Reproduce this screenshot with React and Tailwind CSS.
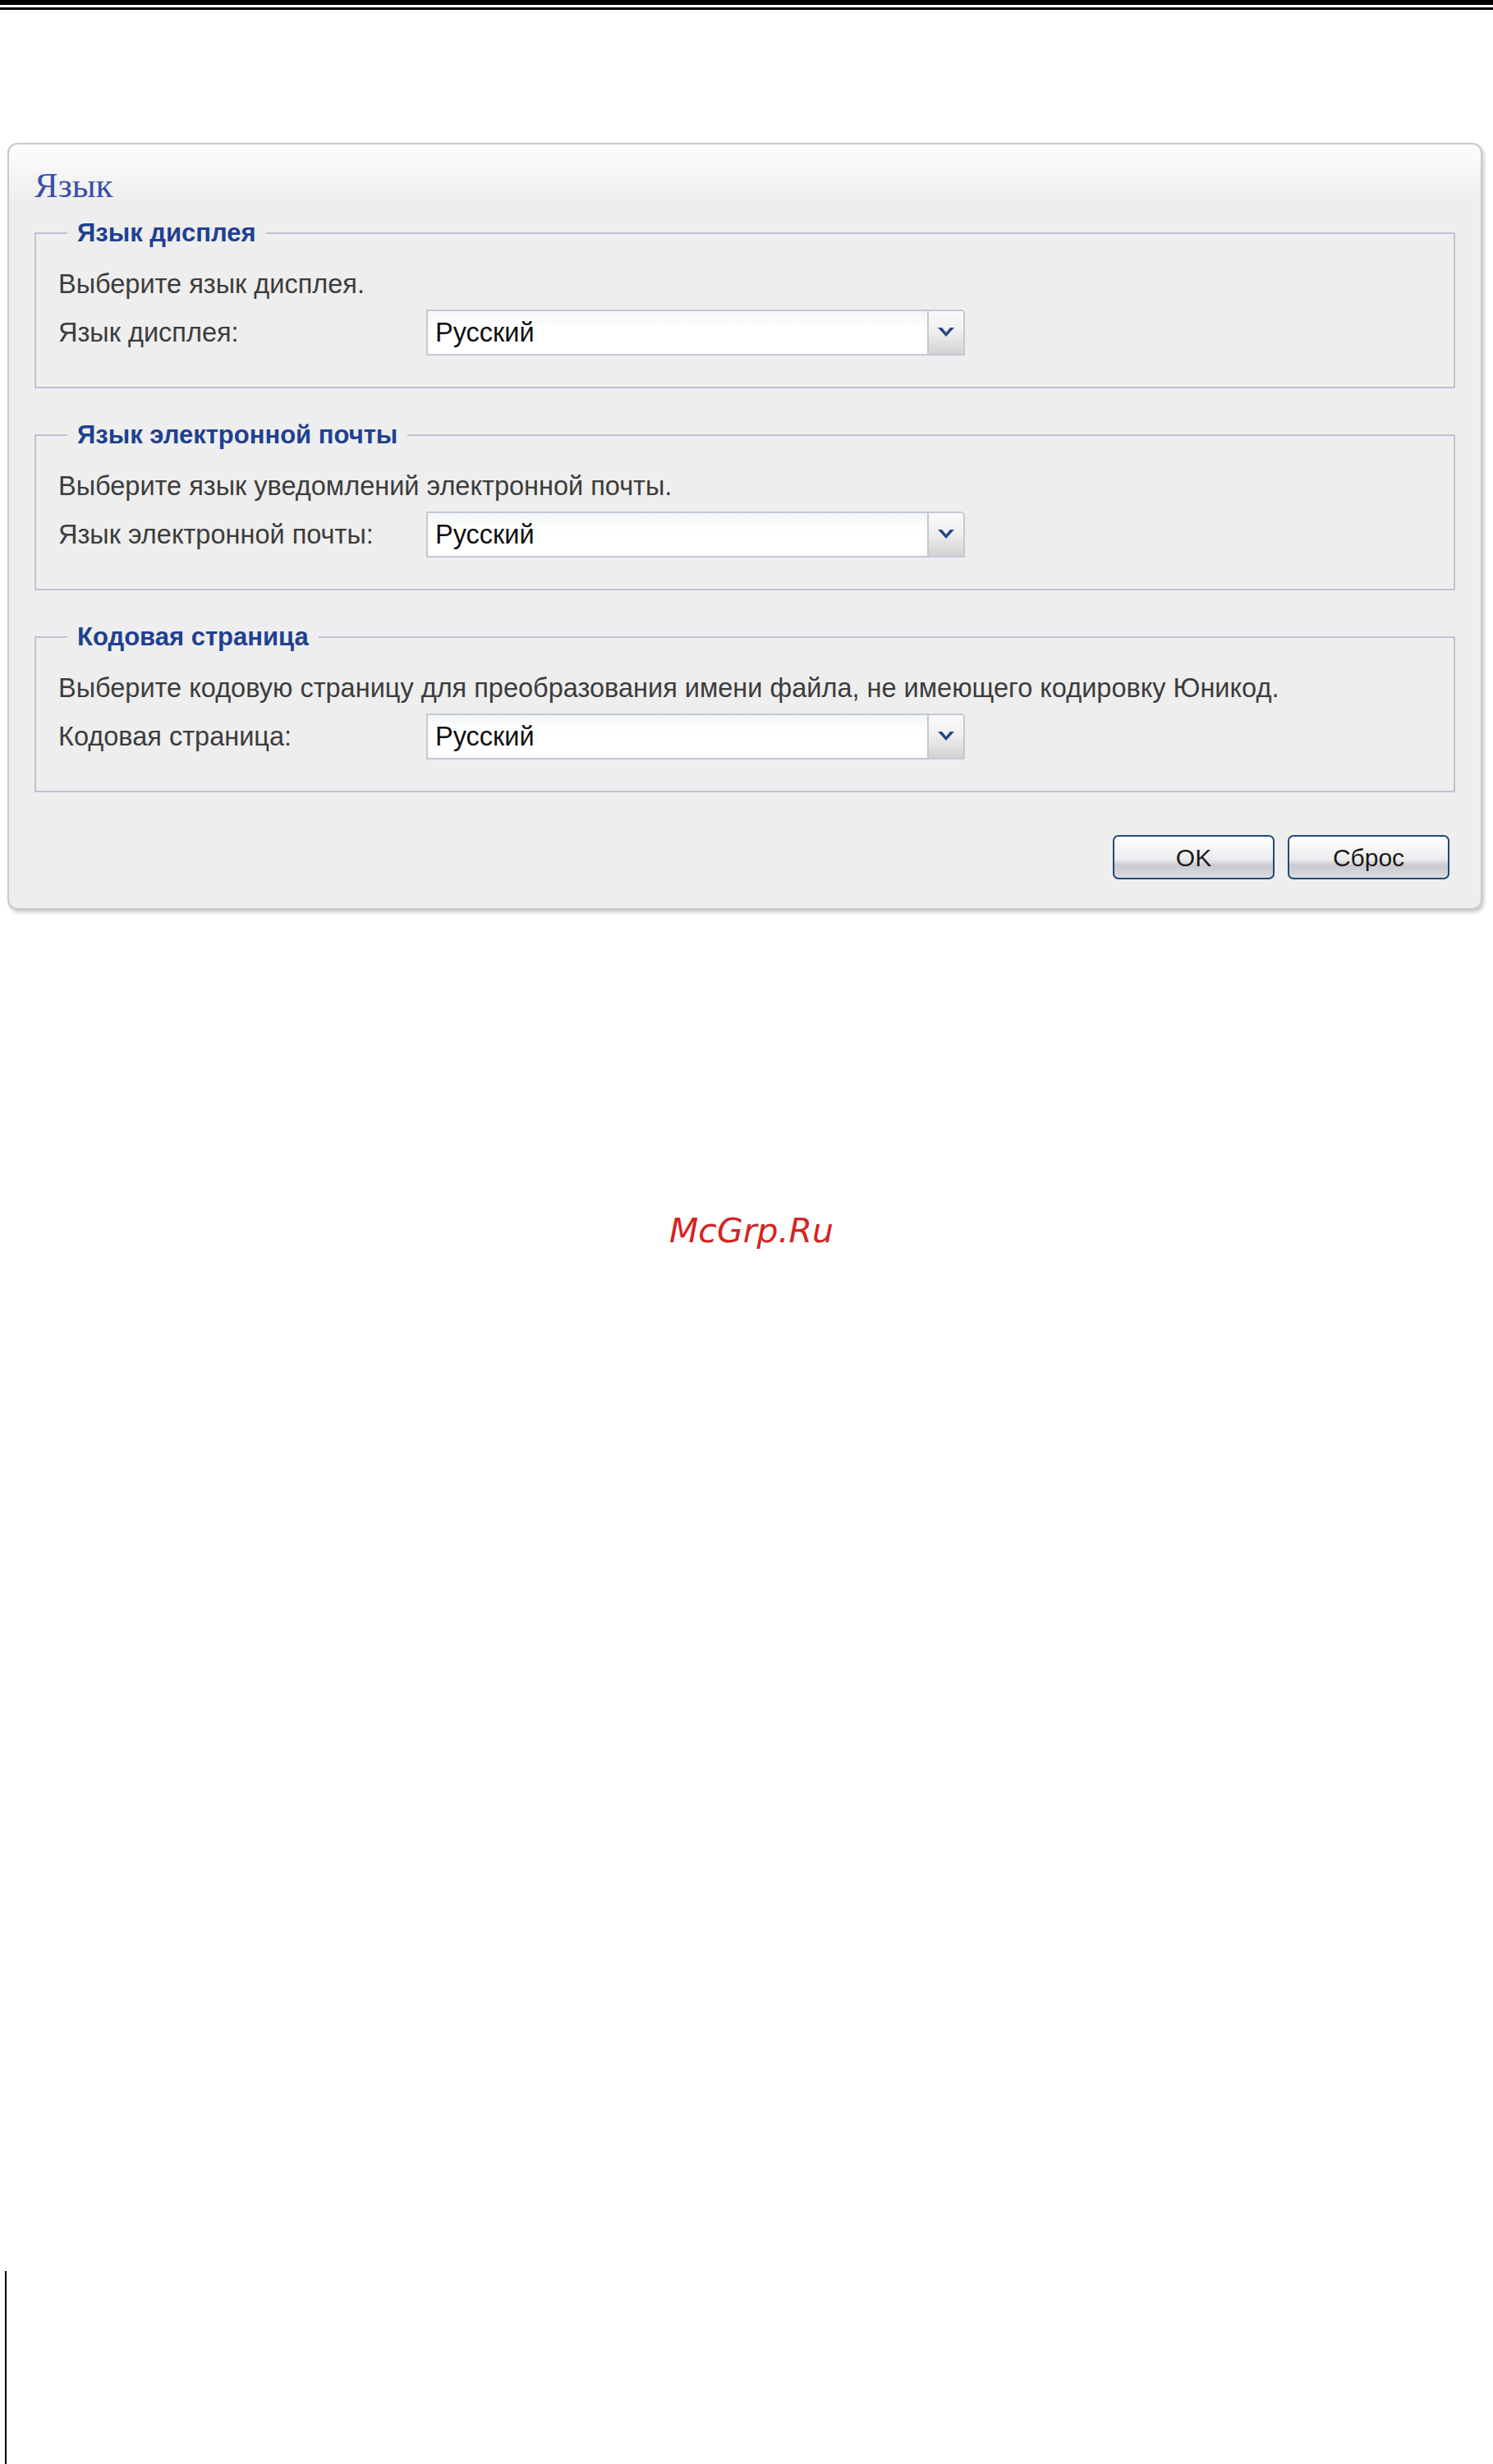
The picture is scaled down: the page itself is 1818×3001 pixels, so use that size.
import { Fragment } from "react";

const body = { fontFamily: '"Liberation Sans", Arial, sans-serif' };

function Chevron() {
  return (
    <svg width="20" height="12" viewBox="0 0 20 12">
      <polygon points="0,0 5,0 10,6 15,0 20,0 10,11" fill="#27478a" />
    </svg>
  );
}

function Select({ value }) {
  return (
    <div className="flex h-[56px] w-[656px] rounded-tr-[5px] border-2 border-[#c4c8d6] bg-white">
      <div className="flex flex-1 items-center bg-[linear-gradient(to_bottom,#f4f6f6_0px,#ffffff_22px)] pl-[9px] text-[32.5px] text-[#111]">
        {value}
      </div>
      <div className="flex w-[44px] items-center justify-center rounded-tr-[4px] border-l-2 border-[#c4c8d6] bg-[linear-gradient(to_bottom,#fafafa,#f0f0f0_45%,#d2d2d2)]">
        <Chevron />
      </div>
    </div>
  );
}

function Group({ title, hint, label }) {
  return (
    <fieldset className="border-2 border-[#bec2d2] pt-[23px] pb-[38px] pl-[27px]">
      <legend className="ml-[11px] px-[12px] text-[31px] font-bold leading-[38px] text-[#1f4190]">
        {title}
      </legend>
      <div className="text-[32.5px] leading-[40px] text-[#3c3c3c]">{hint}</div>
      <div className="mt-[11px] flex items-center">
        <div className="w-[448px] text-[32.5px] text-[#3c3c3c]">{label}</div>
        <Select value="Русский" />
      </div>
    </fieldset>
  );
}

function Btn({ children }) {
  return (
    <button className="h-[54px] w-[197px] rounded-[7px] border-2 border-[#1f4a78] bg-[linear-gradient(to_bottom,#ffffff_0%,#ececee_55%,#c9cad0_70%,#dcdde0_100%)] text-[30px] text-[#1a1a1a]">
      {children}
    </button>
  );
}

const groups = [
  { title: "Язык дисплея", hint: "Выберите язык дисплея.", label: "Язык дисплея:" },
  {
    title: "Язык электронной почты",
    hint: "Выберите язык уведомлений электронной почты.",
    label: "Язык электронной почты:",
  },
  {
    title: "Кодовая страница",
    hint: "Выберите кодовую страницу для преобразования имени файла, не имеющего кодировку Юникод.",
    label: "Кодовая страница:",
  },
];

export default function App() {
  return (
    <div className="flex h-[3001px] w-[1818px] flex-col bg-white" style={body}>
      <div className="h-[6px] bg-black" />
      <div className="mt-[3px] h-[3px] bg-black" />

      <div className="mt-[162px] ml-[9px] w-[1796px] rounded-[12px] border-2 border-[#c9c9c9] bg-[linear-gradient(to_bottom,#fdfdfd_0px,#eeeeee_70px)] px-[31px] pt-[26px] pb-[35px] shadow-[2px_3px_4px_rgba(0,0,0,0.22)]">
        <div
          className="text-[43px] leading-[48px] text-[#3a4ea8]"
          style={{ fontFamily: '"Liberation Serif", "Times New Roman", serif' }}
        >
          Язык
        </div>
        <div className="mt-[15px] flex flex-col gap-[38px]">
          {groups.map((g) => (
            <Fragment key={g.title}>
              <Group {...g} />
            </Fragment>
          ))}
        </div>
        <div className="mt-[52px] flex justify-end gap-[16px] pr-[7px]">
          <Btn>OK</Btn>
          <Btn>Сброс</Btn>
        </div>
      </div>

      <div
        className="mt-[367px] ml-[815px] text-[41px] leading-[48px] italic text-[#d42424]"
        style={{ fontFamily: '"DejaVu Sans", sans-serif' }}
      >
        McGrp.Ru
      </div>

      <div className="mt-auto ml-[6px] h-[235px] w-[2px] bg-black" />
    </div>
  );
}
